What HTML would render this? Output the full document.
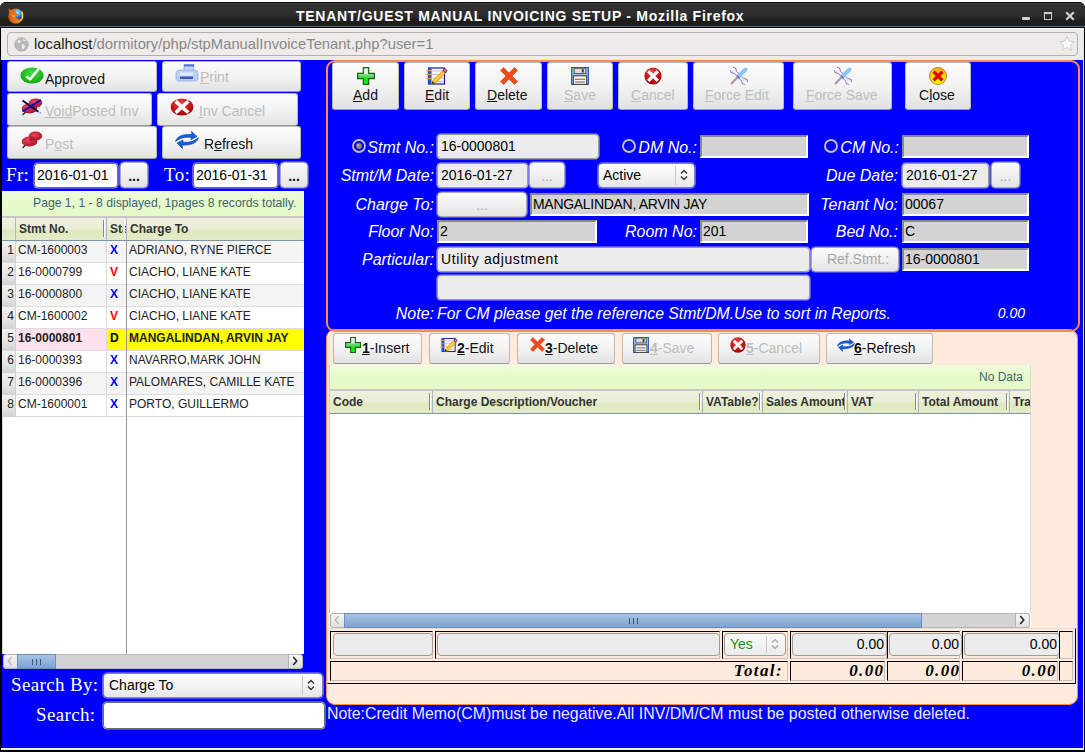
<!DOCTYPE html>
<html><head><meta charset="utf-8">
<style>
*{box-sizing:border-box;margin:0;padding:0}
html,body{width:1085px;height:752px;overflow:hidden;background:#fff;font-family:"Liberation Sans",sans-serif;}
.a{position:absolute}
#win{position:absolute;left:0;top:2px;width:1085px;height:750px;background:#000;border-radius:6px 6px 0 0}
#title{position:absolute;left:0;top:2px;width:1085px;height:25px;background:linear-gradient(#0a0a0a 0,#0a0a0a 1px,#444 1px,#303030 3px,#2e2e2e 55%,#1e1e1e 75%,#1c1c1c);border-radius:6px 6px 0 0;border-bottom:1px solid #566a88}
#ttext{position:absolute;left:296px;top:8px;white-space:nowrap;color:#fff;font-weight:bold;font-size:14px;letter-spacing:0.72px}
#nav{position:absolute;left:1px;top:28px;width:1082px;height:32px;background:#edeceb;border-top:1px solid #fbfbfb}
#url{position:absolute;left:7px;top:32px;width:1071px;height:24px;border:1px solid #b3b0aa;border-radius:4px;background:#edeceb}
#urltext{position:absolute;left:34px;top:36px;font-size:14.8px;color:#888;white-space:nowrap}
#urltext b{font-weight:normal;color:#1a1a1a}
#content{position:absolute;left:2px;top:60px;width:1081px;height:688px;background:#0000ff}
#botline{position:absolute;left:1px;top:748px;width:1083px;height:2px;background:#f0eeea}
.btn{position:absolute;border:1px solid #b9b9b9;border-bottom-color:#9d9d9d;border-radius:3px;background:linear-gradient(#fcfcfc,#f3f3f3 50%,#e2e2e2);font-size:14px;color:#111;white-space:nowrap}
.btn.dis{color:#bdbdbd}
.u{text-decoration:underline}
.lbl{position:absolute;color:#fff;font-style:italic;font-size:16px;white-space:nowrap;text-align:right}
.ser{position:absolute;color:#fff;font-family:"Liberation Serif",serif;font-size:19px;letter-spacing:0.35px;white-space:nowrap}
.inp{position:absolute;background:#ececec;border:1px solid #a09c94;border-radius:4px;box-shadow:0 0 0 0.6px #9a9ae8;font-size:14px;color:#000;padding-left:3px;white-space:nowrap;overflow:hidden}
.inpw{background:#fff;border-color:#6c6c6c}
.dsb{position:absolute;background:#d3d3d3;border:2px solid;border-color:#8a8a8a #fff #fff #8a8a8a;font-size:14px;color:#000;padding-left:1px;white-space:nowrap;overflow:hidden}
.dots{position:absolute;border:1px solid #a8a8b8;box-shadow:0 0 0 0.6px #8a8ae8;border-radius:4px;background:linear-gradient(#fbfbfb,#e4e4e4);font-size:14px;text-align:center;color:#111;font-weight:bold}
.dots.dis{color:#aaa;font-weight:normal}
.radio{position:absolute;width:14px;height:14px;border-radius:50%;border:1.8px solid #c4c0c8}
.grid{position:absolute;background:#fff;overflow:hidden}
.gbar{position:absolute;background:linear-gradient(#f0fde0,#e8fbcc 40%,#e6f9c8);border-bottom:1px solid #c8c8c8;color:#3f6473;font-size:12px;white-space:nowrap}
.ghdr{position:absolute;background:linear-gradient(#efefde,#eaeed6 50%,#dfe9bc 55%,#e3ebc6);border-top:1px solid #c8c8c8;border-bottom:1px solid #7c93a6;font-weight:bold;font-size:12px;color:#333;white-space:nowrap}
.hc{position:absolute;top:0;height:100%;padding-left:3px;line-height:23px;overflow:hidden;border-right:1px solid #a6b8c0}
.row{position:absolute;height:22px;border-bottom:1px solid #dcdcdc;font-size:12px;color:#222;white-space:nowrap}
.c{position:absolute;top:0;height:21px;line-height:19px;overflow:hidden;border-right:1px solid #dcdcdc;padding-left:2px}
.cell{position:absolute;border:1px solid;border-color:#000 #c8c0b8 #c8c0b8 #000}
.tot{position:absolute;font-family:"Liberation Serif",serif;font-weight:bold;font-style:italic;font-size:17px;letter-spacing:1.4px;text-align:right;color:#000}
.hh{position:absolute;right:1px;top:2px;bottom:3px;width:2px;border-left:1px solid #8a8a8a;background:#fff}
.sb{position:absolute;background:#d4d4d4;border:1px solid #b4b4b4;border-radius:3px}
</style></head><body>
<div id="win"></div>
<div id="title"></div>
<div id="ttext">TENANT/GUEST MANUAL INVOICING SETUP - Mozilla Firefox</div>
<div id="nav"></div>
<div id="url"></div>
<div id="urltext"><b>localhost</b>/dormitory/php/stpManualInvoiceTenant.php?user=1</div>
<div id="content"></div>
<div id="botline"></div>
<div class="a" style="left:1083px;top:28px;width:1px;height:722px;background:#e8e6e0"></div>

<!-- LEFT PANEL BUTTONS -->
<div class="btn" style="left:7px;top:61px;width:150px;height:31px"><span class="a" style="left:37px;top:9px">Approved</span></div>
<div class="btn dis" style="left:162px;top:61px;width:139px;height:31px"><span class="a" style="left:37px;top:7px"><span class="u">P</span>rint</span></div>
<div class="btn dis" style="left:7px;top:93px;width:145px;height:33px"><span class="a" style="left:37px;top:9px"><span class="u">Void</span>Posted Inv</span></div>
<div class="btn dis" style="left:157px;top:93px;width:141px;height:33px"><span class="a" style="left:41px;top:9px"><span class="u">I</span>nv Cancel</span></div>
<div class="btn dis" style="left:7px;top:126px;width:150px;height:33px"><span class="a" style="left:37px;top:9px">P<span class="u">o</span>st</span></div>
<div class="btn" style="left:162px;top:126px;width:139px;height:33px"><span class="a" style="left:41px;top:9px">R<span class="u">e</span>fresh</span></div>

<div class="ser" style="left:6px;top:164px">Fr:</div>
<div class="inp inpw" style="left:34px;top:163px;width:84px;height:25px;line-height:23px;padding-left:2px">2016-01-01</div>
<div class="dots" style="left:120px;top:162px;width:28px;height:26px;line-height:26px">...</div>
<div class="ser" style="left:164px;top:164px">To:</div>
<div class="inp inpw" style="left:193px;top:163px;width:85px;height:25px;line-height:23px;padding-left:2px">2016-01-31</div>
<div class="dots" style="left:280px;top:162px;width:28px;height:26px;line-height:26px">...</div>

<!-- LEFT GRID -->
<div class="grid" style="left:2px;top:191px;width:302px;height:463px">
<div class="gbar" style="left:0;top:0;width:302px;height:26px;line-height:25px;padding-left:31px;font-size:12.2px">Page 1, 1 - 8 displayed, 1pages 8 records totally.</div>
<div class="ghdr" style="left:0;top:26px;width:302px;height:24px"><div class="hc" style="left:0;width:14px;border-right-color:#a9b9c5"></div><div class="hc" style="left:14px;width:91px"><span style="padding-left:0px">Stmt No.</span><i class="hh"></i></div><div class="hc" style="left:105px;width:20px">Status<i class="hh" style="border-left-color:#ddd"></i></div><div class="hc" style="left:125px;width:177px;border-right:none">Charge To</div></div>
<div class="row" style="left:0;top:50px;width:302px;background:#f4f4f4"><div class="c rn" style="left:0;width:14px;height:22px;text-align:right;padding:0 1px 0 0;background:linear-gradient(#f2f2f2,#e4e4e4 60%,#d2d2d2);border-right-color:#d0d0d0">1</div><div class="c" style="left:14px;width:91px;background:#f4f4f4;">CM-1600003</div><div class="c" style="left:105px;width:20px;background:#f4f4f4;color:#0000ff;font-weight:bold;text-align:left;padding:0 0 0 3px">X</div><div class="c" style="left:125px;width:177px;background:#f4f4f4;border-right:none;padding-left:2px">ADRIANO, RYNE PIERCE</div></div>
<div class="row" style="left:0;top:72px;width:302px;background:#fff"><div class="c rn" style="left:0;width:14px;height:22px;text-align:right;padding:0 1px 0 0;background:linear-gradient(#f2f2f2,#e4e4e4 60%,#d2d2d2);border-right-color:#d0d0d0">2</div><div class="c" style="left:14px;width:91px;background:#fff;">16-0000799</div><div class="c" style="left:105px;width:20px;background:#fff;color:#ff0000;font-weight:bold;text-align:left;padding:0 0 0 3px">V</div><div class="c" style="left:125px;width:177px;background:#fff;border-right:none;padding-left:2px">CIACHO, LIANE KATE</div></div>
<div class="row" style="left:0;top:94px;width:302px;background:#f4f4f4"><div class="c rn" style="left:0;width:14px;height:22px;text-align:right;padding:0 1px 0 0;background:linear-gradient(#f2f2f2,#e4e4e4 60%,#d2d2d2);border-right-color:#d0d0d0">3</div><div class="c" style="left:14px;width:91px;background:#f4f4f4;">16-0000800</div><div class="c" style="left:105px;width:20px;background:#f4f4f4;color:#0000ff;font-weight:bold;text-align:left;padding:0 0 0 3px">X</div><div class="c" style="left:125px;width:177px;background:#f4f4f4;border-right:none;padding-left:2px">CIACHO, LIANE KATE</div></div>
<div class="row" style="left:0;top:116px;width:302px;background:#fff"><div class="c rn" style="left:0;width:14px;height:22px;text-align:right;padding:0 1px 0 0;background:linear-gradient(#f2f2f2,#e4e4e4 60%,#d2d2d2);border-right-color:#d0d0d0">4</div><div class="c" style="left:14px;width:91px;background:#fff;">CM-1600002</div><div class="c" style="left:105px;width:20px;background:#fff;color:#ff0000;font-weight:bold;text-align:left;padding:0 0 0 3px">V</div><div class="c" style="left:125px;width:177px;background:#fff;border-right:none;padding-left:2px">CIACHO, LIANE KATE</div></div>
<div class="row" style="left:0;top:138px;width:302px;background:#f4f4f4"><div class="c rn" style="left:0;width:14px;height:22px;text-align:right;padding:0 1px 0 0;background:linear-gradient(#f2f2f2,#e4e4e4 60%,#d2d2d2);border-right-color:#d0d0d0">5</div><div class="c" style="left:14px;width:91px;background:#fde0ee;font-weight:bold;">16-0000801</div><div class="c" style="left:105px;width:20px;background:#ffff00;color:#000;font-weight:bold;text-align:left;padding:0 0 0 3px">D</div><div class="c" style="left:125px;width:177px;background:#ffff00;font-weight:bold;border-right:none;padding-left:2px">MANGALINDAN, ARVIN JAY</div></div>
<div class="row" style="left:0;top:160px;width:302px;background:#fff"><div class="c rn" style="left:0;width:14px;height:22px;text-align:right;padding:0 1px 0 0;background:linear-gradient(#f2f2f2,#e4e4e4 60%,#d2d2d2);border-right-color:#d0d0d0">6</div><div class="c" style="left:14px;width:91px;background:#fff;">16-0000393</div><div class="c" style="left:105px;width:20px;background:#fff;color:#0000ff;font-weight:bold;text-align:left;padding:0 0 0 3px">X</div><div class="c" style="left:125px;width:177px;background:#fff;border-right:none;padding-left:2px">NAVARRO,MARK JOHN</div></div>
<div class="row" style="left:0;top:182px;width:302px;background:#f4f4f4"><div class="c rn" style="left:0;width:14px;height:22px;text-align:right;padding:0 1px 0 0;background:linear-gradient(#f2f2f2,#e4e4e4 60%,#d2d2d2);border-right-color:#d0d0d0">7</div><div class="c" style="left:14px;width:91px;background:#f4f4f4;">16-0000396</div><div class="c" style="left:105px;width:20px;background:#f4f4f4;color:#0000ff;font-weight:bold;text-align:left;padding:0 0 0 3px">X</div><div class="c" style="left:125px;width:177px;background:#f4f4f4;border-right:none;padding-left:2px">PALOMARES, CAMILLE KATE</div></div>
<div class="row" style="left:0;top:204px;width:302px;background:#fff"><div class="c rn" style="left:0;width:14px;height:22px;text-align:right;padding:0 1px 0 0;background:linear-gradient(#f2f2f2,#e4e4e4 60%,#d2d2d2);border-right-color:#d0d0d0">8</div><div class="c" style="left:14px;width:91px;background:#fff;">CM-1600001</div><div class="c" style="left:105px;width:20px;background:#fff;color:#0000ff;font-weight:bold;text-align:left;padding:0 0 0 3px">X</div><div class="c" style="left:125px;width:177px;background:#fff;border-right:none;padding-left:2px">PORTO, GUILLERMO</div></div>
<div class="a" style="left:124px;top:50px;width:1px;height:413px;background:#9a9a9a"></div>
</div>
<div id="leftgrid"></div>

<!-- LEFT GRID SCROLLBAR -->
<div class="a" style="left:2px;top:417px;width:1px;height:237px;background:#d4d4d4"></div>
<div class="sb" style="left:3px;top:654px;width:300px;height:15px"></div>
<div class="a" style="left:3px;top:654px;width:15px;height:15px;border:1px solid #b4b4b4;border-radius:3px 0 0 3px;background:linear-gradient(#f6f6f6,#e0e0e0);color:#b0b0b0;font-size:11px;line-height:13px;text-align:center"></div>
<div class="a" style="left:17px;top:654px;width:39px;height:15px;border:1px solid #6d8fb8;background:linear-gradient(#a7c3e6,#7ea3d2)"><div class="a" style="left:14px;top:4px;width:9px;height:6px;border-left:1px solid #3a5478;border-right:1px solid #3a5478"><div class="a" style="left:3px;top:0;width:1px;height:6px;background:#3a5478"></div></div></div>
<div class="a" style="left:288px;top:654px;width:15px;height:15px;border:1px solid #b4b4b4;border-radius:0 3px 3px 0;background:linear-gradient(#f6f6f6,#e0e0e0);color:#222;font-size:13px;line-height:13px;text-align:center;font-weight:bold"></div>

<div class="ser" style="left:11px;top:674px">Search By:</div>
<div class="inp" style="left:103px;top:673px;width:220px;height:25px;line-height:23px;border-color:#8080c8;background:linear-gradient(#fefefe,#f4f4f4 50%,#e6e6e6);padding-left:5px">Charge To</div>
<div class="a" style="left:302px;top:676px;width:1px;height:19px;background:#c8c8c8"></div>
<svg class="a" style="left:307px;top:679px" width="8" height="12" viewBox="0 0 8 12"><path d="M1 4.5L4 1.5L7 4.5M1 7.5L4 10.5L7 7.5" stroke="#333" stroke-width="1.4" fill="none"/></svg>
<div class="ser" style="left:36px;top:704px">Search:</div>
<div class="inp inpw" style="left:103px;top:702px;width:222px;height:27px;border-color:#6c6c6c;border-radius:4px"></div>
<div class="a" style="left:327px;top:705px;font-size:15.9px;color:#eaeaff;white-space:nowrap">Note:Credit Memo(CM)must be negative.All INV/DM/CM must be posted otherwise deleted.</div>


<!-- RIGHT BOTTOM PANEL -->
<div class="a" style="left:326px;top:329px;width:752px;height:376px;border:1px solid #ff8c4a;border-radius:9px;background:#ffebdc"></div>

<div class="btn" style="left:333px;top:333px;width:89px;height:31px"><span class="a" style="left:28px;top:6px"><b class="u">1</b>-Insert</span></div>
<div class="btn" style="left:429px;top:333px;width:81px;height:31px"><span class="a" style="left:27px;top:6px"><b class="u">2</b>-Edit</span></div>
<div class="btn" style="left:517px;top:333px;width:98px;height:31px"><span class="a" style="left:27px;top:6px"><b class="u">3</b>-Delete</span></div>
<div class="btn dis" style="left:622px;top:333px;width:90px;height:31px"><span class="a" style="left:27px;top:6px"><b class="u">4</b>-Save</span></div>
<div class="btn dis" style="left:718px;top:333px;width:102px;height:31px"><span class="a" style="left:27px;top:6px"><b class="u">5</b>-Cancel</span></div>
<div class="btn" style="left:826px;top:333px;width:107px;height:31px"><span class="a" style="left:27px;top:6px"><b class="u">6</b>-Refresh</span></div>

<div class="grid" style="left:329px;top:365px;width:702px;height:262px">
<div class="gbar" style="left:0;top:0;width:702px;height:25px;line-height:24px;text-align:right;padding-right:8px">No Data</div>
<div class="ghdr" style="left:0;top:25px;width:702px;height:24px"><div class="hc" style="left:0px;width:104px;padding-left:4px">Code<i class="hh"></i></div><div class="hc" style="left:104px;width:270px">Charge Description/Voucher<i class="hh"></i></div><div class="hc" style="left:374px;width:60px">VATable?<i class="hh"></i></div><div class="hc" style="left:434px;width:85px">Sales Amount<i class="hh"></i></div><div class="hc" style="left:519px;width:71px">VAT<i class="hh"></i></div><div class="hc" style="left:590px;width:91px">Total Amount<i class="hh"></i></div><div class="hc" style="left:681px;width:21px;border-right:none">Transaction</div></div>
</div>
<div class="sb" style="left:330px;top:613px;width:700px;height:15px"></div>
<div class="a" style="left:330px;top:613px;width:15px;height:15px;border:1px solid #b4b4b4;border-radius:3px 0 0 3px;background:linear-gradient(#f6f6f6,#e0e0e0);color:#b0b0b0;font-size:11px;line-height:13px;text-align:center"></div>
<div class="a" style="left:344px;top:613px;width:578px;height:15px;border:1px solid #6d8fb8;background:linear-gradient(#a7c3e6,#7ea3d2)"><div class="a" style="left:284px;top:4px;width:9px;height:6px;border-left:1px solid #3a5478;border-right:1px solid #3a5478"><div class="a" style="left:3px;top:0;width:1px;height:6px;background:#3a5478"></div></div></div>
<div class="a" style="left:1015px;top:613px;width:15px;height:15px;border:1px solid #b4b4b4;border-radius:0 3px 3px 0;background:linear-gradient(#f6f6f6,#e0e0e0);color:#222;font-size:13px;line-height:13px;text-align:center;font-weight:bold"></div>

<div class="a" style="left:329px;top:365px;width:1px;height:248px;background:#d0d0d0"></div>
<div class="a" style="left:1030px;top:365px;width:1px;height:248px;background:#d8d8d8"></div>
<!-- footer table -->
<div class="a" style="left:327px;top:628px;width:749px;height:56px;border:1px solid;border-color:#e8e0d8 #000 #000 #e8e0d8"></div>
<div class="cell" style="left:330px;top:631px;width:103px;height:28px"></div>
<div class="inp" style="left:333px;top:633px;box-shadow:none;width:100px;height:23px"></div>
<div class="cell" style="left:435px;top:631px;width:285px;height:28px"></div>
<div class="inp" style="left:437px;top:633px;box-shadow:none;width:283px;height:23px"></div>
<div class="cell" style="left:722px;top:631px;width:66px;height:28px"></div>
<div class="inp" style="left:724px;top:633px;box-shadow:none;width:62px;height:23px;line-height:21px;color:#1a8a1a;padding-left:5px;background:linear-gradient(#fafafa,#ececec)">Yes</div>
<div class="a" style="left:766px;top:636px;width:1px;height:17px;background:#c8c8c8"></div><svg class="a" style="left:771px;top:638px" width="8" height="12" viewBox="0 0 8 12"><path d="M1 4.5L4 1.5L7 4.5M1 7.5L4 10.5L7 7.5" stroke="#aaa" stroke-width="1.4" fill="none"/></svg>
<div class="cell" style="left:790px;top:631px;width:97px;height:28px"></div>
<div class="inp" style="left:792px;top:633px;box-shadow:none;width:95px;height:23px;line-height:21px;text-align:right;padding-right:2px">0.00</div>
<div class="cell" style="left:887px;top:631px;width:73px;height:28px"></div>
<div class="inp" style="left:889px;top:633px;box-shadow:none;width:73px;height:23px;line-height:21px;text-align:right;padding-right:2px">0.00</div>
<div class="cell" style="left:962px;top:631px;width:96px;height:28px"></div>
<div class="inp" style="left:964px;top:633px;box-shadow:none;width:96px;height:23px;line-height:21px;text-align:right;padding-right:2px">0.00</div>
<div class="cell" style="left:1059px;top:631px;width:14px;height:28px"></div>

<div class="cell" style="left:330px;top:661px;width:458px;height:20px"></div>
<div class="tot" style="left:330px;top:661px;width:453px">Total:</div>
<div class="cell" style="left:790px;top:661px;width:95px;height:20px"></div>
<div class="tot" style="left:790px;top:661px;width:94.5px">0.00</div>
<div class="cell" style="left:887px;top:661px;width:73px;height:20px"></div>
<div class="tot" style="left:888px;top:661px;width:72.5px">0.00</div>
<div class="cell" style="left:962px;top:661px;width:96px;height:20px"></div>
<div class="tot" style="left:962px;top:661px;width:95px">0.00</div>
<div class="cell" style="left:1059px;top:661px;width:14px;height:20px"></div>

<!-- RIGHT TOP PANEL -->
<div class="a" style="left:326px;top:60px;width:754px;height:272px;border:2px solid #ff8c4a;border-radius:9px"></div>
<div class="btn" style="left:332px;top:62px;width:67px;height:48px"><span class="a" style="left:20px;top:24px"><span class="u">A</span>dd</span></div>
<div class="btn" style="left:404px;top:62px;width:66px;height:48px"><span class="a" style="left:20px;top:24px"><span class="u">E</span>dit</span></div>
<div class="btn" style="left:475px;top:62px;width:67px;height:48px"><span class="a" style="left:11px;top:24px"><span class="u">D</span>elete</span></div>
<div class="btn dis" style="left:547px;top:62px;width:66px;height:48px"><span class="a" style="left:16px;top:24px"><span class="u">S</span>ave</span></div>
<div class="btn dis" style="left:618px;top:62px;width:70px;height:48px"><span class="a" style="left:12px;top:24px"><span class="u">C</span>ancel</span></div>
<div class="btn dis" style="left:693px;top:62px;width:91px;height:48px"><span class="a" style="left:11px;top:24px"><span class="u">F</span>orce Edit</span></div>
<div class="btn dis" style="left:793px;top:62px;width:99px;height:48px"><span class="a" style="left:12px;top:24px"><span class="u">F</span>orce Save</span></div>
<div class="btn" style="left:905px;top:62px;width:66px;height:48px"><span class="a" style="left:13px;top:24px">C<span class="u">l</span>ose</span></div>

<svg class="a" style="left:351px;top:138px" width="16" height="16" viewBox="0 0 16 16"><circle cx="8" cy="8" r="6" fill="none" stroke="#c4c0b4" stroke-width="1.8"/><circle cx="8" cy="8" r="2.9" fill="#8c8872"/><circle cx="7.2" cy="7" r="1" fill="#c8c6b0"/></svg>
<div class="lbl" style="left:334px;top:139px;width:100px">Stmt No.:</div>
<div class="inp" style="left:437px;top:134px;width:162px;height:25px;line-height:23px">16-0000801</div>
<svg class="a" style="left:621px;top:138px" width="16" height="16" viewBox="0 0 16 16"><circle cx="8" cy="8" r="6" fill="none" stroke="#c4c0b4" stroke-width="1.9"/></svg>
<div class="lbl" style="left:597px;top:139px;width:100px">DM No.:</div>
<div class="dsb" style="left:700px;top:135px;width:108px;height:23px"></div>
<svg class="a" style="left:823px;top:138px" width="16" height="16" viewBox="0 0 16 16"><circle cx="8" cy="8" r="6" fill="none" stroke="#c4c0b4" stroke-width="1.9"/></svg>
<div class="lbl" style="left:799px;top:139px;width:100px">CM No.:</div>
<div class="dsb" style="left:902px;top:135px;width:127px;height:23px"></div>

<div class="lbl" style="left:304px;top:167px;width:130px">Stmt/M Date:</div>
<div class="inp" style="left:437px;top:163px;width:91px;height:25px;line-height:23px">2016-01-27</div>
<div class="dots dis" style="left:529px;top:162px;width:36px;height:26px;line-height:26px">...</div>
<div class="inp" style="left:598px;top:163px;width:97px;height:25px;line-height:23px;border-color:#8080c8;background:linear-gradient(#fefefe,#f4f4f4 50%,#e6e6e6);padding-left:4px">Active</div>
<div class="a" style="left:675px;top:166px;width:1px;height:19px;background:#c8c8c8"></div><svg class="a" style="left:680px;top:169px" width="8" height="12" viewBox="0 0 8 12"><path d="M1 4.5L4 1.5L7 4.5M1 7.5L4 10.5L7 7.5" stroke="#333" stroke-width="1.4" fill="none"/></svg>
<div class="lbl" style="left:768px;top:167px;width:130px">Due Date:</div>
<div class="inp" style="left:902px;top:163px;width:87px;height:25px;line-height:23px">2016-01-27</div>
<div class="dots dis" style="left:991px;top:162px;width:29px;height:26px;line-height:26px">...</div>

<div class="lbl" style="left:304px;top:196px;width:130px">Charge To:</div>
<div class="dots dis" style="left:437px;top:192px;width:90px;height:25px;line-height:25px">...</div>
<div class="dsb" style="left:530px;top:193px;width:279px;height:23px;line-height:19px;letter-spacing:-0.3px">MANGALINDAN, ARVIN JAY</div>
<div class="lbl" style="left:768px;top:196px;width:130px">Tenant No:</div>
<div class="dsb" style="left:902px;top:193px;width:127px;height:23px;line-height:19px">00067</div>

<div class="lbl" style="left:304px;top:223px;width:130px">Floor No:</div>
<div class="dsb" style="left:437px;top:220px;width:160px;height:23px;line-height:19px">2</div>
<div class="lbl" style="left:567px;top:223px;width:130px">Room No:</div>
<div class="dsb" style="left:700px;top:220px;width:108px;height:23px;line-height:19px">201</div>
<div class="lbl" style="left:768px;top:223px;width:130px">Bed No.:</div>
<div class="dsb" style="left:902px;top:220px;width:127px;height:23px;line-height:19px">C</div>

<div class="lbl" style="left:304px;top:251px;width:130px">Particular:</div>
<div class="inp" style="left:437px;top:247px;width:373px;height:25px;line-height:23px;letter-spacing:0.6px">Utility adjustment</div>
<div class="dots dis" style="left:811px;top:247px;width:88px;height:25px;line-height:23px;padding-left:6px;color:#a8a8a8">Ref.Stmt.:</div>
<div class="dsb" style="left:902px;top:248px;width:127px;height:23px;line-height:19px">16-0000801</div>
<div class="inp" style="left:437px;top:275px;width:373px;height:25px"></div>

<div class="lbl" style="left:304px;top:305px;width:130px">Note:</div>
<div class="lbl" style="left:437px;top:305px;text-align:left;font-size:15.77px">For CM please get the reference Stmt/DM.Use to sort in Reports.</div>
<div class="lbl" style="left:925px;top:305px;width:100px;font-size:14px">0.00</div>



<!-- ICONS -->
<svg class="a" style="left:7px;top:656px" width="6" height="10" viewBox="0 0 6 10"><path d="M4.8 1L1.2 5L4.8 9" stroke="#b8b8b8" stroke-width="1.3" fill="none"/></svg><svg class="a" style="left:292px;top:656px" width="6" height="10" viewBox="0 0 6 10"><path d="M1.2 1L4.8 5L1.2 9" stroke="#222" stroke-width="1.5" fill="none"/></svg><svg class="a" style="left:334px;top:615px" width="6" height="10" viewBox="0 0 6 10"><path d="M4.8 1L1.2 5L4.8 9" stroke="#b8b8b8" stroke-width="1.3" fill="none"/></svg><svg class="a" style="left:1019px;top:615px" width="6" height="10" viewBox="0 0 6 10"><path d="M1.2 1L4.8 5L1.2 9" stroke="#222" stroke-width="1.5" fill="none"/></svg>
<svg class="a" style="left:7px;top:7px" width="17" height="17" viewBox="0 0 17 17"><defs><radialGradient id="ffb" cx="0.5" cy="0.3" r="0.6"><stop offset="0" stop-color="#a0e8ff"/><stop offset="0.5" stop-color="#40a0e8"/><stop offset="1" stop-color="#1040a0"/></radialGradient><radialGradient id="ffo" cx="0.75" cy="0.45" r="0.75"><stop offset="0" stop-color="#ffd030"/><stop offset="0.45" stop-color="#f09020"/><stop offset="1" stop-color="#c84a10"/></radialGradient></defs><circle cx="8.8" cy="9.2" r="7.6" fill="url(#ffo)"/><circle cx="10.2" cy="7.6" r="5.4" fill="url(#ffb)"/><path d="M1.6 1.2L4.2 3.6L6.6 3.2L8.6 4.4L9.4 6.6L10.6 7.6L9.8 9.4L8.2 9.8L10.4 11.4L12.6 11.8L10.6 13.2L7.4 12.8L4.6 10.8L2.8 7.6L2.2 4.4z" fill="#e8701a"/><path d="M5.4 8.2L8 8.6L7.6 10L5.8 9.6z" fill="#f8c080"/><path d="M15.6 4.6C16.6 7 16.6 10.6 14.6 13C15 10.4 14.8 7.4 13.8 5.6z" fill="#ffd840"/></svg>
<svg class="a" style="left:14px;top:37px" width="15" height="15" viewBox="0 0 15 15"><circle cx="7.5" cy="7.5" r="6.8" fill="#b8b8b8" stroke="#a8a8a8" stroke-width="0.6"/><path d="M4 3.5C5 3 6.5 3.5 7 4.5C6.5 5.5 5.5 6 4.5 6C3.5 5.5 3.5 4.5 4 3.5zM8.5 2C10 2 11.5 3 12 4C11 4.5 10 4 9 3.5zM8 7.5C9.5 7 11 8 11 9.5C10.5 11 9.5 12.5 8.5 12.5C8 11 7.5 9 8 7.5z" fill="#ececec"/></svg>
<svg class="a" style="left:1059px;top:36px" width="16" height="15" viewBox="0 0 16 15"><path d="M8 0.6L10.2 5.2L15.3 5.7L11.4 9.1L12.6 14.2L8 11.5L3.4 14.2L4.6 9.1L0.7 5.7L5.8 5.2z" fill="#fafafa" stroke="#c8c8c8" stroke-width="0.9" stroke-linejoin="round"/></svg>
<div class="a" style="left:1022px;top:17px;width:8px;height:3px;background:#d0d0d0;border-radius:1px"></div>
<div class="a" style="left:1044px;top:12px;width:8px;height:8px;border:1.4px solid #d0d0d0;border-top-width:2.2px"></div>
<svg class="a" style="left:1065px;top:11px" width="10" height="10" viewBox="0 0 10 10"><path d="M1.2 1.2L8.8 8.8M8.8 1.2L1.2 8.8" stroke="#d0d0d0" stroke-width="2.2"/></svg>
<svg class="a" style="left:20px;top:67px" width="24" height="17" viewBox="0 0 24 17"><defs><radialGradient id="gck" cx="0.5" cy="0.35" r="0.7"><stop offset="0" stop-color="#40e040"/><stop offset="1" stop-color="#12a012"/></radialGradient></defs><ellipse cx="12" cy="8.5" rx="11.5" ry="8" fill="url(#gck)"/><path d="M6.2 9.2L10 12.3L18.6 2" stroke="#fff" stroke-width="2.6" fill="none" stroke-linejoin="round"/></svg>
<svg class="a" style="left:175px;top:64px;opacity:0.8" width="24" height="18" viewBox="0 0 24 18"><path d="M9 0.5h10l-0.5 6h-9.5z" fill="#b8d0f8" stroke="#6070d0" stroke-width="0.6"/><rect x="9" y="0.5" width="10" height="2" fill="#2050d0"/><path d="M1 9C1 7 3 6 6 6h14c2 0 3 1 3 3v5c0 2-1 3-3 3h-16c-2 0-3-1-3-3z" fill="#a8c8f4" stroke="#7080e0" stroke-width="0.6"/><rect x="5" y="8.5" width="13" height="3" fill="#e0ecff"/><rect x="5" y="12.5" width="13" height="2.5" fill="#1a30b0"/></svg>
<svg class="a" style="left:21px;top:98px" width="22" height="18" viewBox="0 0 22 18"><defs><radialGradient id="pn2198" cx="0.4" cy="0.35" r="0.7"><stop offset="0" stop-color="#e84860"/><stop offset="1" stop-color="#a81028"/></radialGradient></defs><path d="M2 16.5L5.5 13" stroke="#202020" stroke-width="1.3" stroke-linecap="round"/><ellipse cx="8.5" cy="10.5" rx="7.8" ry="5" fill="url(#pn2198)"/><ellipse cx="14.5" cy="5" rx="6.5" ry="4.2" fill="url(#pn2198)" stroke="#901020" stroke-width="0.5"/><path d="M9 9.5L12 7" stroke="#b01830" stroke-width="3"/><path d="M1.5 2.5L17 13.5" stroke="#000040" stroke-width="2"/><path d="M1.5 13.5L20 2" stroke="#0000c0" stroke-width="2"/><path d="M17 13.5L20 15.5" stroke="#4040ff" stroke-width="1.4" stroke-dasharray="1 1"/></svg>
<svg class="a" style="left:170px;top:98px" width="24" height="18" viewBox="0 0 24 18"><defs><radialGradient id="rg17098" cx="0.45" cy="0.3" r="0.75"><stop offset="0" stop-color="#e84a4a"/><stop offset="0.6" stop-color="#c81010"/><stop offset="1" stop-color="#8a0000"/></radialGradient></defs><ellipse cx="12" cy="9" rx="11.3" ry="8.6" fill="url(#rg17098)"/><path d="M7 4.5L17 13.5M17 4.5L7 13.5" stroke="#fff" stroke-width="3.6" stroke-linecap="square"/></svg>
<svg class="a" style="left:21px;top:131px" width="22" height="18" viewBox="0 0 22 18"><defs><radialGradient id="pn21131" cx="0.4" cy="0.35" r="0.7"><stop offset="0" stop-color="#e84860"/><stop offset="1" stop-color="#a81028"/></radialGradient></defs><path d="M2 16.5L5.5 13" stroke="#202020" stroke-width="1.3" stroke-linecap="round"/><ellipse cx="8.5" cy="10.5" rx="7.8" ry="5" fill="url(#pn21131)"/><ellipse cx="14.5" cy="5" rx="6.5" ry="4.2" fill="url(#pn21131)" stroke="#901020" stroke-width="0.5"/><path d="M9 9.5L12 7" stroke="#b01830" stroke-width="3"/></svg>
<svg class="a" style="left:175px;top:131px" width="24" height="18" viewBox="0 0 24 18"><path d="M0.5 10.5C2 5 8 3 17 3.5L16.5 0.5L22 5.5L16 8.5L16.5 6.5C10 5.5 5 7 0.5 10.5z" fill="#1060e0" stroke="#0030a0" stroke-width="0.6"/><path d="M23.5 6.5C22 12 16 14.5 7 14L7.5 17.5L2 12L8 9L7.5 11C14 12 19 10.5 23.5 6.5z" fill="#1060e0" stroke="#0030a0" stroke-width="0.6"/></svg>
<svg class="a" style="left:357px;top:67px" width="18" height="18" viewBox="0 0 18 18"><defs><linearGradient id="pg357" x1="0" y1="0" x2="0" y2="1"><stop offset="0" stop-color="#e8f0e8"/><stop offset="0.38" stop-color="#d8ecd8"/><stop offset="0.42" stop-color="#7ad87a"/><stop offset="0.7" stop-color="#10e010"/><stop offset="1" stop-color="#00ff00"/></linearGradient></defs><path d="M6.3 0.6h5.4v5.7h5.7v5.4h-5.7v5.7h-5.4v-5.7h-5.7v-5.4h5.7z" fill="url(#pg357)" stroke="#156015" stroke-width="1.2"/></svg>
<svg class="a" style="left:426px;top:67px" width="22" height="18" viewBox="0 0 22 18"><rect x="2.5" y="1" width="16" height="16" fill="#f4faff" stroke="#1a1aa0" stroke-width="1.2"/><rect x="2.5" y="1" width="3" height="16" fill="#1a50e0"/><path d="M5 4h13M5 7.5h13M5 11h13M5 14.5h13" stroke="#e8a0a0" stroke-width="0.8"/><path d="M0.5 3.5h5M0.5 7.5h5M0.5 11.5h5" stroke="#e0a030" stroke-width="1.4"/><path d="M6.5 14L17 3.5L19.5 6L9 16.5L6 17z" fill="#f8d020" stroke="#c08010" stroke-width="0.7"/><path d="M17 3.5L18.5 1L21 3.5L19.5 6z" fill="#f07050" stroke="#301080" stroke-width="0.8"/><path d="M6.5 14L6 17L9 16.5z" fill="#302020"/></svg>
<svg class="a" style="left:500px;top:67px" width="18" height="18" viewBox="0 0 18 18"><path d="M3.5 0.5L9 6L14.5 0.5L17.5 3.5L12 9L17.5 14.5L14.5 17.5L9 12L3.5 17.5L0.5 14.5L6 9L0.5 3.5z" fill="#f04a18"/><path d="M3.5 0.5L9 6L14.5 0.5L17.5 3.5L12 9L17.5 14.5L14.5 17.5L9 12L3.5 17.5L0.5 14.5L6 9L0.5 3.5z" fill="none" stroke="#d83a10" stroke-width="0.6"/></svg>
<svg class="a" style="left:571px;top:67px;opacity:0.9" width="18" height="18" viewBox="0 0 18 18"><rect x="0.6" y="0.6" width="16.8" height="16.8" fill="#8ac0f0" stroke="#1050c0" stroke-width="1.2"/><rect x="3.2" y="1.2" width="11.6" height="5.4" fill="#d8d8d8" stroke="#403830" stroke-width="0.9"/><rect x="10.8" y="2.2" width="2" height="3.4" fill="#302820"/><rect x="2.4" y="8.8" width="13.2" height="8.6" fill="#fafafa" stroke="#403830" stroke-width="1.2"/><path d="M4 12.2h10M4 15h10" stroke="#403830" stroke-width="0.9"/></svg>
<svg class="a" style="left:644px;top:67px" width="18" height="18" viewBox="0 0 18 18"><defs><radialGradient id="rc64467" cx="0.45" cy="0.3" r="0.75"><stop offset="0" stop-color="#e84a4a"/><stop offset="0.6" stop-color="#c81010"/><stop offset="1" stop-color="#8a0000"/></radialGradient></defs><circle cx="9" cy="9" r="8.6" fill="url(#rc64467)"/><path d="M5.3 5.3L12.7 12.7M12.7 5.3L5.3 12.7" stroke="#fff" stroke-width="3.2" stroke-linecap="square"/></svg>
<svg class="a" style="left:730px;top:67px;opacity:0.7" width="18" height="18" viewBox="0 0 18 18"><path d="M3.6 3.6L14.4 14.4" stroke="#5a48b8" stroke-width="4"/><circle cx="3.4" cy="3.4" r="3.3" fill="#5a48b8"/><circle cx="14.6" cy="14.6" r="3.3" fill="#5a48b8"/><path d="M3.6 3.6L14.4 14.4" stroke="#f0ecf8" stroke-width="2.4"/><circle cx="3.4" cy="3.4" r="2.4" fill="#f0ecf8"/><circle cx="14.6" cy="14.6" r="2.4" fill="#f0ecf8"/><path d="M-0.5 1.8L1.8 -0.5L4.2 1.9L1.9 4.2z" fill="#f6f6f6"/><path d="M18.5 16.2L16.2 18.5L13.8 16.1L16.1 13.8z" fill="#f6f6f6"/><path d="M1.6 16.4L8 10" stroke="#8a7a80" stroke-width="2.2" stroke-linecap="round"/><path d="M7.6 10.4L10.2 7.8" stroke="#1838c0" stroke-width="3.6"/><path d="M10 8L15.4 2.6" stroke="#60acf4" stroke-width="4" stroke-linecap="round"/></svg>
<svg class="a" style="left:834px;top:67px;opacity:0.7" width="18" height="18" viewBox="0 0 18 18"><path d="M3.6 3.6L14.4 14.4" stroke="#5a48b8" stroke-width="4"/><circle cx="3.4" cy="3.4" r="3.3" fill="#5a48b8"/><circle cx="14.6" cy="14.6" r="3.3" fill="#5a48b8"/><path d="M3.6 3.6L14.4 14.4" stroke="#f0ecf8" stroke-width="2.4"/><circle cx="3.4" cy="3.4" r="2.4" fill="#f0ecf8"/><circle cx="14.6" cy="14.6" r="2.4" fill="#f0ecf8"/><path d="M-0.5 1.8L1.8 -0.5L4.2 1.9L1.9 4.2z" fill="#f6f6f6"/><path d="M18.5 16.2L16.2 18.5L13.8 16.1L16.1 13.8z" fill="#f6f6f6"/><path d="M1.6 16.4L8 10" stroke="#8a7a80" stroke-width="2.2" stroke-linecap="round"/><path d="M7.6 10.4L10.2 7.8" stroke="#1838c0" stroke-width="3.6"/><path d="M10 8L15.4 2.6" stroke="#60acf4" stroke-width="4" stroke-linecap="round"/></svg>
<svg class="a" style="left:929px;top:67px" width="18" height="18" viewBox="0 0 18 18"><defs><linearGradient id="cy" x1="0" y1="0" x2="0" y2="1"><stop offset="0" stop-color="#ffb000"/><stop offset="1" stop-color="#ffff00"/></linearGradient></defs><circle cx="9" cy="9" r="8.5" fill="url(#cy)" stroke="#a06820" stroke-width="0.8"/><path d="M4.6 4.6L13.4 13.4M13.4 4.6L4.6 13.4" stroke="#e00000" stroke-width="3.2"/></svg>
<svg class="a" style="left:345px;top:337px" width="16" height="16" viewBox="0 0 18 18"><defs><linearGradient id="pg345" x1="0" y1="0" x2="0" y2="1"><stop offset="0" stop-color="#e8f0e8"/><stop offset="0.38" stop-color="#d8ecd8"/><stop offset="0.42" stop-color="#7ad87a"/><stop offset="0.7" stop-color="#10e010"/><stop offset="1" stop-color="#00ff00"/></linearGradient></defs><path d="M6.3 0.6h5.4v5.7h5.7v5.4h-5.7v5.7h-5.4v-5.7h-5.7v-5.4h5.7z" fill="url(#pg345)" stroke="#156015" stroke-width="1.2"/></svg>
<svg class="a" style="left:440px;top:337px" width="18" height="16" viewBox="0 0 22 18"><rect x="2.5" y="1" width="16" height="16" fill="#f4faff" stroke="#1a1aa0" stroke-width="1.2"/><rect x="2.5" y="1" width="3" height="16" fill="#1a50e0"/><path d="M5 4h13M5 7.5h13M5 11h13M5 14.5h13" stroke="#e8a0a0" stroke-width="0.8"/><path d="M0.5 3.5h5M0.5 7.5h5M0.5 11.5h5" stroke="#e0a030" stroke-width="1.4"/><path d="M6.5 14L17 3.5L19.5 6L9 16.5L6 17z" fill="#f8d020" stroke="#c08010" stroke-width="0.7"/><path d="M17 3.5L18.5 1L21 3.5L19.5 6z" fill="#f07050" stroke="#301080" stroke-width="0.8"/><path d="M6.5 14L6 17L9 16.5z" fill="#302020"/></svg>
<svg class="a" style="left:530px;top:337px" width="15" height="15" viewBox="0 0 18 18"><path d="M3.5 0.5L9 6L14.5 0.5L17.5 3.5L12 9L17.5 14.5L14.5 17.5L9 12L3.5 17.5L0.5 14.5L6 9L0.5 3.5z" fill="#f04a18"/><path d="M3.5 0.5L9 6L14.5 0.5L17.5 3.5L12 9L17.5 14.5L14.5 17.5L9 12L3.5 17.5L0.5 14.5L6 9L0.5 3.5z" fill="none" stroke="#d83a10" stroke-width="0.6"/></svg>
<svg class="a" style="left:633px;top:337px;opacity:0.9" width="16" height="16" viewBox="0 0 18 18"><rect x="0.6" y="0.6" width="16.8" height="16.8" fill="#8ac0f0" stroke="#1050c0" stroke-width="1.2"/><rect x="3.2" y="1.2" width="11.6" height="5.4" fill="#d8d8d8" stroke="#403830" stroke-width="0.9"/><rect x="10.8" y="2.2" width="2" height="3.4" fill="#302820"/><rect x="2.4" y="8.8" width="13.2" height="8.6" fill="#fafafa" stroke="#403830" stroke-width="1.2"/><path d="M4 12.2h10M4 15h10" stroke="#403830" stroke-width="0.9"/></svg>
<svg class="a" style="left:730px;top:337px" width="16" height="16" viewBox="0 0 18 18"><defs><radialGradient id="rc730337" cx="0.45" cy="0.3" r="0.75"><stop offset="0" stop-color="#e84a4a"/><stop offset="0.6" stop-color="#c81010"/><stop offset="1" stop-color="#8a0000"/></radialGradient></defs><circle cx="9" cy="9" r="8.6" fill="url(#rc730337)"/><path d="M5.3 5.3L12.7 12.7M12.7 5.3L5.3 12.7" stroke="#fff" stroke-width="3.2" stroke-linecap="square"/></svg>
<svg class="a" style="left:837px;top:337px" width="18" height="16" viewBox="0 0 24 18"><path d="M0.5 10.5C2 5 8 3 17 3.5L16.5 0.5L22 5.5L16 8.5L16.5 6.5C10 5.5 5 7 0.5 10.5z" fill="#1060e0" stroke="#0030a0" stroke-width="0.6"/><path d="M23.5 6.5C22 12 16 14.5 7 14L7.5 17.5L2 12L8 9L7.5 11C14 12 19 10.5 23.5 6.5z" fill="#1060e0" stroke="#0030a0" stroke-width="0.6"/></svg>
</body></html>
